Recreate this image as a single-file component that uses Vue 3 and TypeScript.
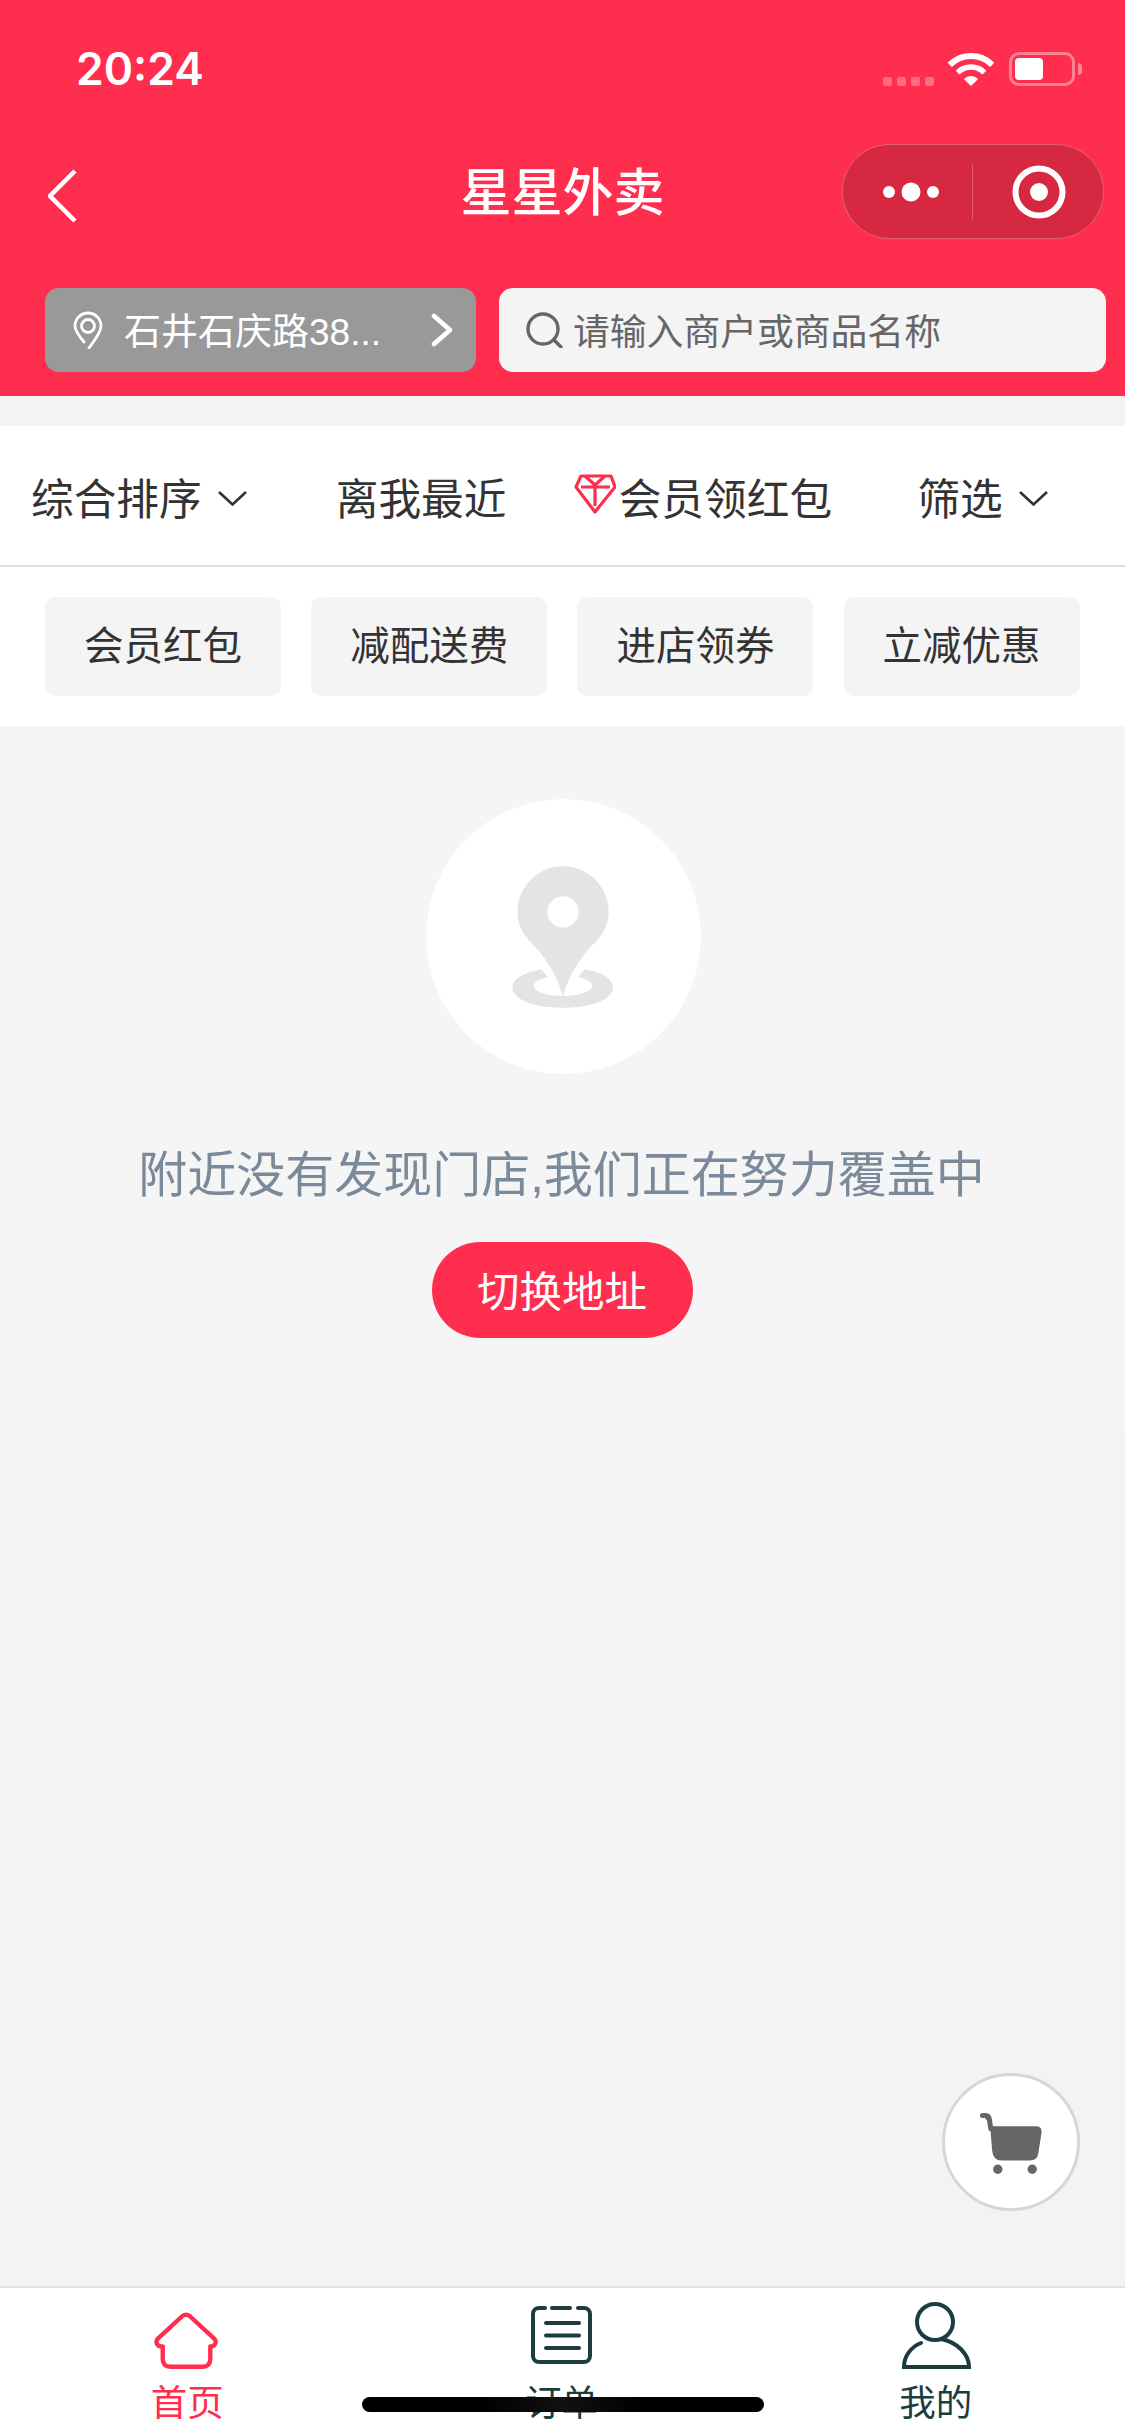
<script setup lang="ts">
const sorts = [
  { label: '综合排序', arrow: true, gem: false },
  { label: '离我最近', arrow: false, gem: false },
  { label: '会员领红包', arrow: false, gem: true },
  { label: '筛选', arrow: true, gem: false },
]
const tags: string[] = ['会员红包', '减配送费', '进店领券', '立减优惠']
</script>

<template>
  <div class="page">
    <header class="header">
      <div class="status">
        <span class="time">20:24</span>
        <div class="status-icons">
          <div class="signal"><i></i><i></i><i></i><i></i></div>
          <svg class="wifi" width="46" height="33" viewBox="0 0 46 33" fill="none" stroke="#fff">
            <path d="M1.8 11.8A30 30 0 0 1 44.2 11.8" stroke-width="6" />
            <path d="M9.6 19.6A19 19 0 0 1 36.4 19.6" stroke-width="5.5" />
            <path d="M23 33L15.9 25.9A10 10 0 0 1 30.1 25.9Z" fill="#fff" stroke="none" />
          </svg>
          <div class="battery"><div class="battery-fill"></div></div>
          <div class="battery-cap"></div>
        </div>
      </div>

      <div class="nav">
        <svg class="back" width="30" height="54" viewBox="0 0 30 54" fill="none" stroke="#fff" stroke-width="4.5">
          <path d="M27 2L2 27L27 52" />
        </svg>
        <h1 class="title">星星外卖</h1>
        <div class="capsule">
          <div class="cap-left">
            <svg width="56" height="20" viewBox="0 0 56 20" fill="#fff">
              <circle cx="6" cy="10" r="6" />
              <circle cx="28" cy="10" r="9.5" />
              <circle cx="50" cy="10" r="6" />
            </svg>
          </div>
          <div class="cap-right">
            <svg width="54" height="54" viewBox="0 0 54 54">
              <circle cx="27" cy="27" r="23.5" fill="none" stroke="#fff" stroke-width="6" />
              <circle cx="27" cy="27" r="9" fill="#fff" />
            </svg>
          </div>
        </div>
      </div>

      <div class="search-row">
        <div class="address">
          <svg width="30" height="38" viewBox="0 0 30 38" fill="none" stroke="#fff" stroke-width="2.8" stroke-linecap="round">
            <path d="M11 31C6 25 2 20 2 15A13 13 0 0 1 28 15C28 22 21 30 16 37" />
            <circle cx="15" cy="15" r="6.5" />
          </svg>
          <span class="address-text">石井石庆路38...</span>
          <svg width="22" height="34" viewBox="0 0 22 34" fill="none" stroke="#fff" stroke-width="4.6" stroke-linecap="round" stroke-linejoin="round">
            <path d="M3 3L19 17L3 31" />
          </svg>
        </div>
        <div class="search">
          <svg width="38" height="36" viewBox="0 0 38 36" fill="none" stroke="#666" stroke-width="3.4" stroke-linecap="round">
            <circle cx="17" cy="17" r="15" />
            <path d="M28 28L35 35" />
          </svg>
          <span class="search-text">请输入商户或商品名称</span>
        </div>
      </div>
    </header>

    <main class="main">
      <section class="filters">
        <div class="sort-row">
          <div v-for="s in sorts" :key="s.label" class="sort">
            <svg v-if="s.gem" class="gem" width="42" height="40" viewBox="0 0 42 40" fill="none" stroke="#ff2d4e" stroke-width="3.2" stroke-linejoin="round">
              <path d="M7 2H37L41 13L21 38L2 13Z" />
              <path d="M7 13H36M11 2L21 11L31 2M21 11V32" />
            </svg>
            <span>{{ s.label }}</span>
            <svg v-if="s.arrow" class="arrow" width="29" height="15" viewBox="0 0 29 15" fill="none" stroke="#333" stroke-width="2.6">
              <path d="M1 1L14.5 13.5L28 1" />
            </svg>
          </div>
        </div>
        <div class="tag-row">
          <div v-for="t in tags" :key="t" class="tag">{{ t }}</div>
        </div>
      </section>

      <section class="empty">
        <div class="empty-circle">
          <svg width="150" height="170" viewBox="-5 3 450 510" fill="#e4e4e4">
            <path d="M155 355C100 365 68 385 68 410C68 445 135 470 220 470C305 470 370 445 370 410C370 385 340 365 285 355L265 378C295 385 308 395 308 405C308 420 270 435 220 435C170 435 132 420 132 405C132 395 145 385 175 378Z" />
            <path d="M220 440C205 370 160 310 125 275C100 250 83 220 83 183A137 137 0 0 1 357 183C357 220 340 250 315 275C280 310 235 370 220 440Z" />
            <circle cx="220" cy="183" r="47" fill="#fff" />
          </svg>
        </div>
        <p class="empty-text">附近没有发现门店,我们正在努力覆盖中</p>
        <button class="switch">切换地址</button>
      </section>
    </main>

    <div class="cart">
      <svg width="138" height="138" viewBox="37 38 413 413">
        <path d="M160 165H170Q178 165 180 180L187 270Q190 300 215 300H300Q322 300 325 280L335 215Q336 197 318 197H184" fill="#666" />
        <path d="M158 165H168Q177 165 179 178L183 205" fill="none" stroke="#666" stroke-width="15" stroke-linecap="round" />
        <circle cx="204" cy="326" r="14" fill="#666" />
        <circle cx="307" cy="326" r="14" fill="#666" />
      </svg>
    </div>

    <nav class="tabbar">
      <div class="tab active">
        <div class="tab-icon">
          <svg width="66" height="58" viewBox="0 0 68 59" fill="none" stroke="#ff2d4e" stroke-width="4.5" stroke-linejoin="round">
            <path d="M9 35H7C3 35 1 30 4 27L29 4Q33 1 37 4L62 27C65 30 63 35 59 35H58V48Q58 56 50 56H17Q9 56 9 48Z" />
          </svg>
        </div>
        <span>首页</span>
      </div>
      <div class="tab">
        <div class="tab-icon">
          <svg class="order-icon" width="61" height="58" viewBox="0 0 61 58" fill="none" stroke="#1c3d40" stroke-width="4" stroke-linecap="round">
            <path d="M14 2H8A6 6 0 0 0 2 8V50A6 6 0 0 0 8 56H53A6 6 0 0 0 59 50V8A6 6 0 0 0 53 2H47" />
            <path d="M21 2H39M15 17H48M15 29.500H48M15 42H48" />
          </svg>
        </div>
        <span>订单</span>
      </div>
      <div class="tab">
        <div class="tab-icon">
          <svg width="70" height="70" viewBox="0 0 70 70" fill="none" stroke="#1c3d40" stroke-width="4" stroke-linecap="round">
            <circle cx="34" cy="22" r="18" />
            <path d="M20 43C10 47 3 56 3 67H68C68 54 56 42 40 39" />
          </svg>
        </div>
        <span>我的</span>
      </div>
    </nav>

    <div class="home-indicator"></div>
  </div>
</template>

<style>
html,
body {
  margin: 0;
  padding: 0;
}
</style>

<style scoped>
.page {
  position: relative;
  width: 1125px;
  height: 2436px;
  display: flex;
  flex-direction: column;
  overflow: hidden;
  background: #f3f3f3;
  font-family: "Liberation Sans", "Noto Sans CJK SC", sans-serif;
}
.header {
  background: #ff2d4e;
  padding-bottom: 24px;
}
.status {
  height: 144px;
  box-sizing: border-box;
  padding: 46px 43px 0 76px;
  display: flex;
  align-items: flex-start;
  justify-content: space-between;
}
.time {
  font-family: Inter, sans-serif;
  font-size: 44.5px;
  font-weight: 600;
  line-height: 46px;
  color: #fff;
}
.status-icons {
  margin-top: 6px;
  height: 34px;
  display: flex;
  align-items: flex-end;
}
.signal {
  display: flex;
  gap: 5px;
  margin-right: 14px;
}
.signal i {
  width: 9px;
  height: 9px;
  border-radius: 2px;
  background: rgba(255, 255, 255, 0.3);
}
.battery {
  width: 66px;
  height: 34px;
  margin-left: 15px;
  box-sizing: border-box;
  border: 3px solid rgba(255, 255, 255, 0.4);
  border-radius: 10px;
  padding: 3px;
}
.battery-fill {
  width: 28px;
  height: 22px;
  border-radius: 4px;
  background: #fff;
}
.battery-cap {
  width: 4px;
  height: 12px;
  margin: 0 0 11px 3px;
  border-radius: 0 4px 4px 0;
  background: rgba(255, 255, 255, 0.4);
}
.nav {
  height: 95px;
  padding: 0 21px;
  display: grid;
  grid-template-columns: 262px 1fr 262px;
  align-items: center;
}
.back {
  margin: 9px 0 0 27px;
}
.title {
  margin: 5px 0 0;
  font-size: 51px;
  font-weight: 500;
  line-height: 90px;
  text-align: center;
  color: #fff;
}
.capsule {
  width: 262px;
  height: 95px;
  box-sizing: border-box;
  display: flex;
  align-items: center;
  background: #d62841;
  border: 1px solid rgba(255, 255, 255, 0.25);
  border-radius: 48px;
}
.cap-left,
.cap-right {
  height: 56px;
  box-sizing: border-box;
  display: flex;
  align-items: center;
  justify-content: center;
}
.cap-left {
  flex: none;
  width: 130px;
  padding-left: 6px;
  border-right: 1px solid rgba(255, 255, 255, 0.25);
}
.cap-right {
  flex: 1;
  padding-left: 1px;
}
.search-row {
  margin-top: 49px;
  padding: 0 19px 0 45px;
  display: flex;
  gap: 23px;
}
.address {
  width: 431px;
  height: 84px;
  box-sizing: border-box;
  padding: 0 23px 0 28px;
  display: flex;
  align-items: center;
  gap: 21px;
  background: #999;
  border-radius: 14px;
}
.address-text {
  flex: 1;
  margin-top: -3px;
  font-size: 37px;
  color: #fff;
  white-space: nowrap;
}
.search {
  flex: 1;
  height: 84px;
  box-sizing: border-box;
  padding-left: 27px;
  display: flex;
  align-items: center;
  gap: 9px;
  background: #f4f4f4;
  border-radius: 14px;
}
.search-text {
  margin-top: -3px;
  font-size: 36.8px;
  color: #666;
}
.main {
  flex: 1;
  padding-top: 30px;
}
.filters {
  background: #fff;
}
.sort-row {
  height: 141px;
  box-sizing: border-box;
  padding-right: 2px;
  border-bottom: 2px solid #ddd;
  display: grid;
  grid-template-columns: repeat(4, 1fr);
}
.sort {
  display: flex;
  align-items: center;
  justify-content: center;
  font-size: 42.7px;
  color: #333;
}
.sort:first-child {
  padding-right: 3px;
}
.gem {
  margin: -4px 3px 0 2px;
}
.arrow {
  margin-left: 16px;
  margin-top: 6px;
}
.tag-row {
  padding: 30px 45px;
  display: grid;
  grid-template-columns: repeat(4, 236px);
  gap: 30.2px;
}
.tag {
  height: 99px;
  line-height: 98px;
  text-align: center;
  font-size: 39.5px;
  color: #333;
  background: #f4f4f4;
  border-radius: 10px;
}
.empty {
  background: #f5f5f5;
  padding: 73px 0 90px 1px;
  display: flex;
  flex-direction: column;
  align-items: center;
}
.empty-circle {
  width: 275px;
  height: 275px;
  border-radius: 50%;
  background: #fff;
  display: flex;
  align-items: center;
  justify-content: center;
}
.empty-text {
  margin: 71px 3px 37px 0;
  font-size: 49px;
  line-height: 60px;
  color: #7a8a9a;
  white-space: nowrap;
}
.switch {
  width: 261px;
  height: 96px;
  margin-right: 2px;
  padding: 0 0 4px;
  border: none;
  border-radius: 48px;
  background: #ff2d4e;
  color: #fff;
  font-family: inherit;
  font-size: 42.5px;
}
.cart {
  position: absolute;
  right: 45px;
  bottom: 225px;
  width: 138px;
  height: 138px;
  box-sizing: border-box;
  border: 3px solid #d6d6d6;
  border-radius: 50%;
  background: #fff;
  display: flex;
  align-items: center;
  justify-content: center;
}
.cart svg {
  flex: none;
}
.tabbar {
  height: 150px;
  box-sizing: border-box;
  padding-right: 2px;
  border-top: 2px solid #e2e2e2;
  background: #fff;
  display: grid;
  grid-template-columns: repeat(3, 1fr);
}
.tab {
  padding-top: 12px;
  display: flex;
  flex-direction: column;
  align-items: center;
  font-size: 36.5px;
  line-height: 50px;
  color: #1c3d40;
}
.tab.active {
  color: #ff2d4e;
}
.tab-icon {
  height: 70px;
  margin-bottom: 9px;
  display: flex;
  align-items: flex-end;
}
.order-icon {
  margin-bottom: 6px;
}
.home-indicator {
  position: absolute;
  left: 362px;
  bottom: 24px;
  width: 402px;
  height: 15px;
  border-radius: 8px;
  background: linear-gradient(90deg, #000 30%, #111 50%, #000 70%);
}
</style>
